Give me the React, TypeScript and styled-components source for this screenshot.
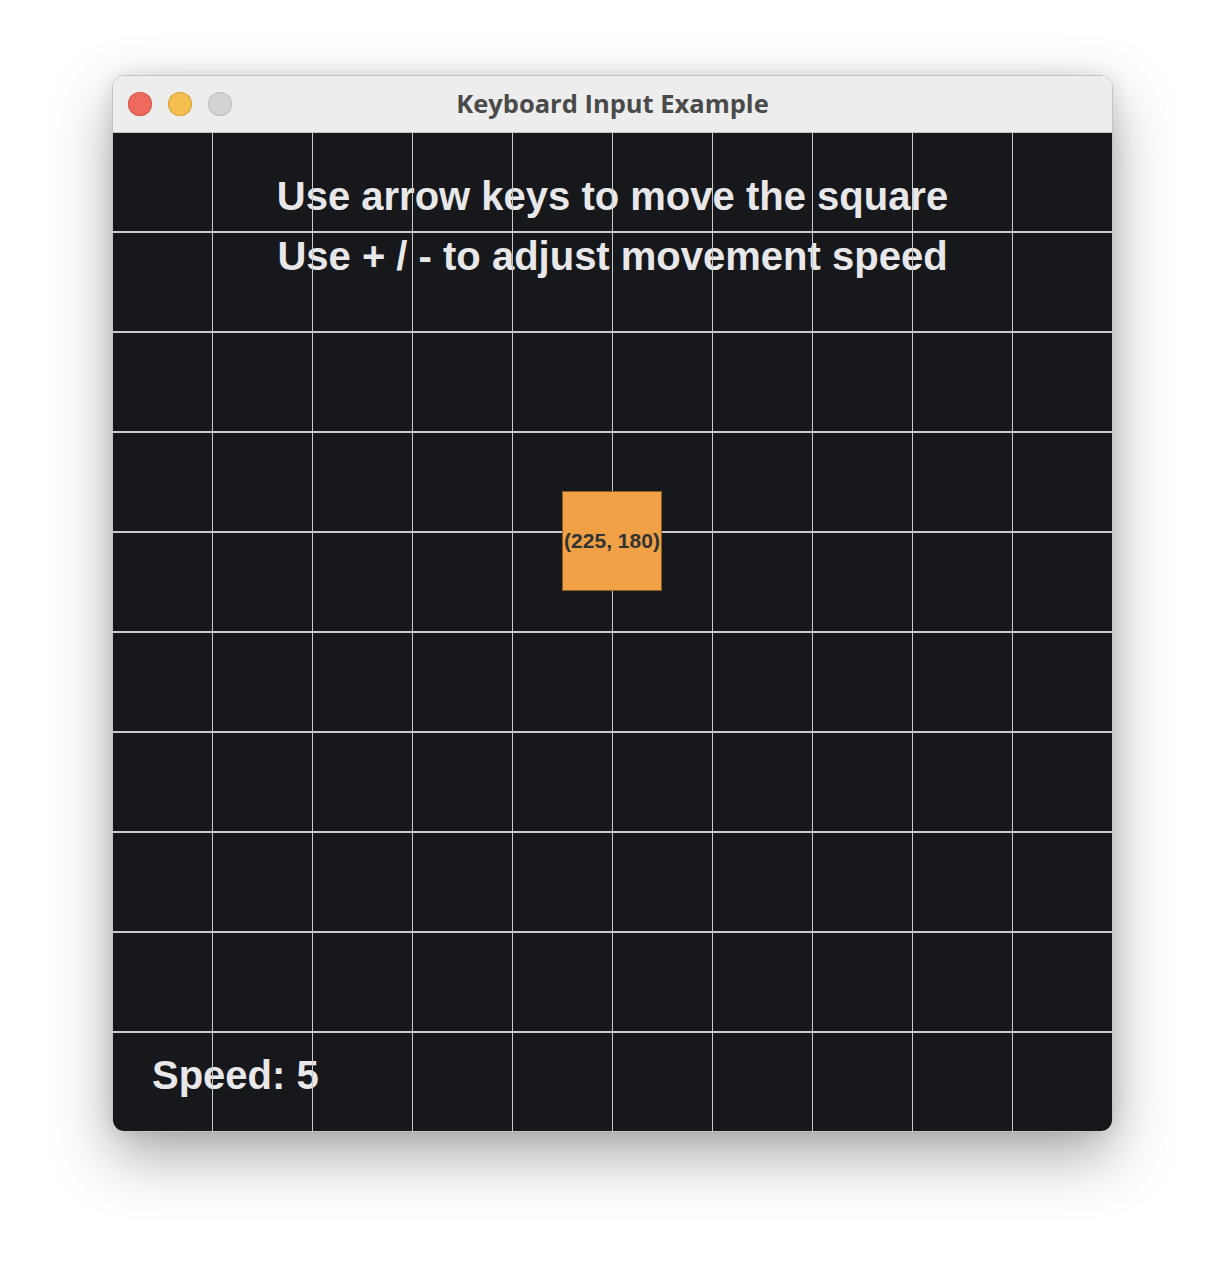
import React from "react";
import styled, { createGlobalStyle } from "styled-components";

const Global = createGlobalStyle`
  html, body { margin: 0; padding: 0; background: #ffffff; }
  body { font-family: "Liberation Sans", Arial, sans-serif; }
`;

const Page = styled.div`
  width: 1224px;
  height: 1280px;
  box-sizing: border-box;
  padding: 75px 0 0 112px;
`;

const Window = styled.div`
  width: 1001px;
  box-sizing: border-box;
  border: 1px solid #c4c4c4;
  border-radius: 12px;
  overflow: hidden;
  display: flex;
  flex-direction: column;
  box-shadow: 0 24px 60px rgba(0, 0, 0, 0.34), 0 0 18px rgba(0, 0, 0, 0.1);
`;

const TitleBar = styled.div`
  height: 56px;
  background: #ecedec;
  border-bottom: 1px solid #c3c3c3;
  display: flex;
  align-items: center;
  position: relative;
  padding-left: 15px;
  gap: 16px;
`;

const Light = styled.span<{ $fill: string; $edge: string }>`
  width: 24px;
  height: 24px;
  border-radius: 50%;
  background: ${(p) => p.$fill};
  box-shadow: inset 0 0 0 1px ${(p) => p.$edge};
`;

const Title = styled.div`
  position: absolute;
  left: 0;
  right: 0;
  top: 11px;
  text-align: center;
  font-family: "Open Sans", Inter, "Liberation Sans", sans-serif;
  font-weight: 700;
  font-size: 25.5px;
  line-height: 32px;
  color: #4a4a4a;
  pointer-events: none;
`;

const Canvas = styled.div`
  position: relative;
  height: 998px;
  background: #17181c;
  display: flex;
  flex-direction: column;
  justify-content: space-between;
  box-sizing: border-box;
  padding: 33px 0 26px 39px;
  font-family: "Liberation Sans", Arial, sans-serif;
  font-weight: 700;
  color: #e8e8ea;

  &::after {
    content: "";
    position: absolute;
    inset: 0;
    pointer-events: none;
    background-image:
      linear-gradient(to right, transparent 99px, #cbcbcf 99px, #cbcbcf 101px, transparent 101px),
      linear-gradient(to bottom, transparent 98px, #cbcbcf 98px, #cbcbcf 100px, transparent 100px);
    background-size: 100px 100px;
    z-index: 1;
  }
`;

const Instructions = styled.div`
  font-size: 40px;
  line-height: 60px;
  text-align: center;
  margin-left: -39px;
`;

const Speed = styled.div`
  font-size: 40px;
  line-height: 60px;
`;

const Square = styled.div`
  position: absolute;
  width: 100px;
  height: 100px;
  box-sizing: border-box;
  background: #f0a045;
  border: 1px solid #8c5c22;
  display: flex;
  align-items: center;
  justify-content: center;
  z-index: 2;
  font-size: 21px;
  font-weight: 700;
  color: #333333;
  white-space: nowrap;
`;

export default function App() {
  const pos = { x: 225, y: 180 };
  return (
    <>
      <Global />
      <Page>
        <Window>
          <TitleBar>
            <Light $fill="#ee6a5f" $edge="#d8564c" />
            <Light $fill="#f5bf4f" $edge="#dca43a" />
            <Light $fill="#d3d3d3" $edge="#bdbdbd" />
            <Title>Keyboard Input Example</Title>
          </TitleBar>
          <Canvas>
            <Instructions>
              <div>Use arrow keys to move the square</div>
              <div>Use + / - to adjust movement speed</div>
            </Instructions>
            <Speed>Speed: 5</Speed>
            <Square style={{ left: pos.x * 2 - 1, top: pos.y * 2 - 2 }}>
              ({pos.x}, {pos.y})
            </Square>
          </Canvas>
        </Window>
      </Page>
    </>
  );
}
